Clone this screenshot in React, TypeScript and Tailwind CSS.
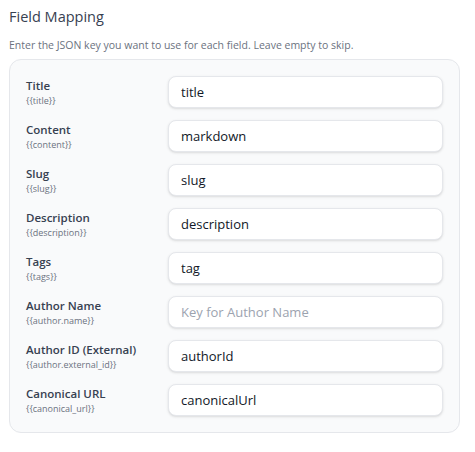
const fields = [
  { label: "Title", key: "{{title}}", value: "title", placeholder: "Key for Title" },
  { label: "Content", key: "{{content}}", value: "markdown", placeholder: "Key for Content" },
  { label: "Slug", key: "{{slug}}", value: "slug", placeholder: "Key for Slug" },
  { label: "Description", key: "{{description}}", value: "description", placeholder: "Key for Description" },
  { label: "Tags", key: "{{tags}}", value: "tag", placeholder: "Key for Tags" },
  { label: "Author Name", key: "{{author.name}}", value: "", placeholder: "Key for Author Name" },
  { label: "Author ID (External)", key: "{{author.external_id}}", value: "authorId", placeholder: "Key for Author ID (External)" },
  { label: "Canonical URL", key: "{{canonical_url}}", value: "canonicalUrl", placeholder: "Key for Canonical URL" },
];

export default function App() {
  return (
    <div className="w-[475px] h-[452px] bg-white px-[9px] pt-[6px] font-['Open_Sans','Noto_Sans',sans-serif]">
      <h2 className="text-[14.5px] font-medium text-[#374151] leading-[22px]">Field Mapping</h2>
      <p className="mt-[9px] text-[10.5px] text-[#6b7280] leading-[16px]">
        Enter the JSON key you want to use for each field. Leave empty to skip.
      </p>
      <div className="mt-[6px] w-[451px] rounded-xl border border-[#e5e7eb] bg-[#f9fafb] p-4">
        <div className="flex flex-col gap-3">
          {fields.map((f) => (
            <div key={f.label} className="flex items-center">
              <div className="w-[142px] shrink-0">
                <div className="text-[11.5px] font-semibold text-[#374151] leading-[16px]">{f.label}</div>
                <div className="text-[9px] text-[#6b7280] leading-[13px]">{f.key}</div>
              </div>
              <input
                defaultValue={f.value}
                placeholder={f.placeholder}
                className="h-[32px] flex-1 rounded-lg border border-[#e5e7eb] bg-white px-3 text-[13px] text-[#111827] shadow-sm outline-none placeholder:text-[#9ca3af]"
              />
            </div>
          ))}
        </div>
      </div>
    </div>
  );
}
